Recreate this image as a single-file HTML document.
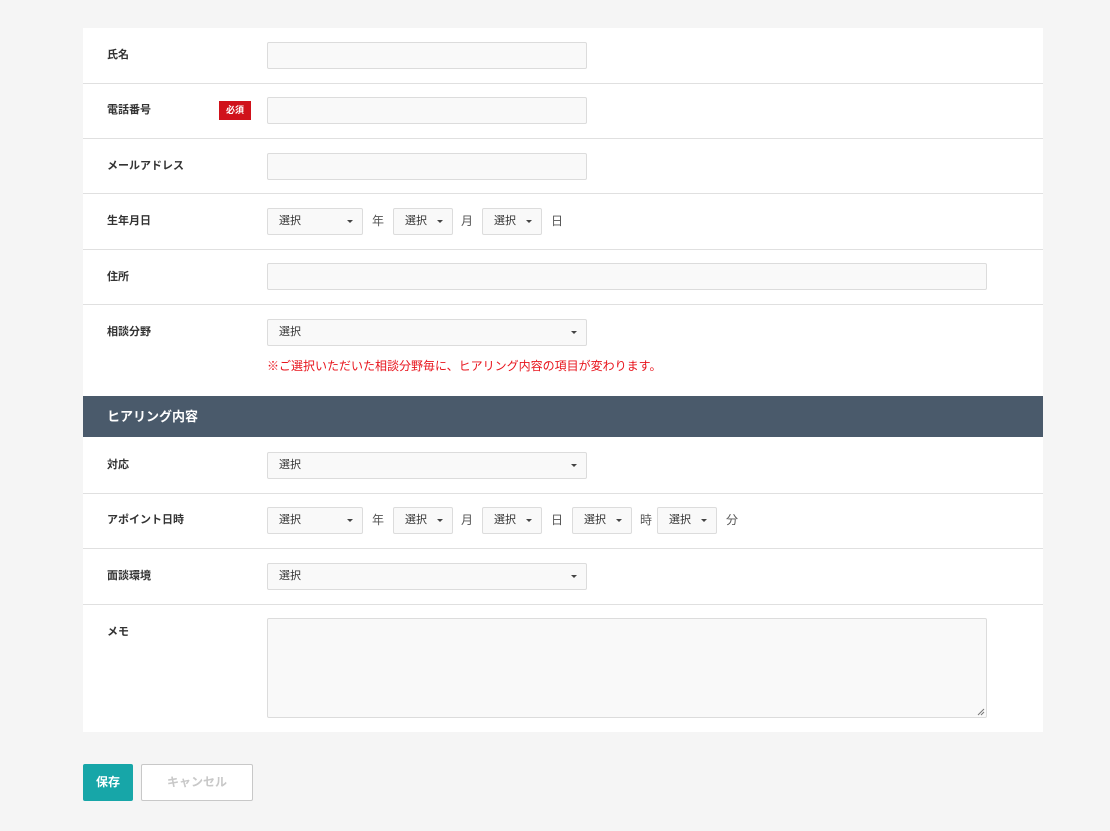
<!DOCTYPE html>
<html><head><meta charset="utf-8"><style>
*{margin:0;padding:0;box-sizing:border-box}
body{width:1110px;height:831px;background:#f5f5f5;position:relative;font-family:"Liberation Sans","Noto Sans CJK JP",sans-serif;overflow:hidden}
.card{position:absolute;left:83px;top:28px;width:960px;height:704px;background:#fff}
.a{position:absolute}
.hr{position:absolute;left:83px;width:960px;height:1px;background:#e0e0e0}
.lb{position:absolute;left:107px;font-size:11px;font-weight:bold;color:#333;line-height:14px}
.in{position:absolute;background:#f9f9f9;border:1px solid #dcdcdc;border-radius:2px;height:27px}
.sel{position:absolute;background:#f9f9f9;border:1px solid #dcdcdc;border-radius:2px;height:27px;font-size:11px;color:#333;padding-left:11px;line-height:25px}
.sel:after{content:"";position:absolute;right:9px;top:11px;border-left:3px solid transparent;border-right:3px solid transparent;border-top:3px solid #444}
.u{position:absolute;font-size:12px;color:#555;line-height:14px}
</style></head><body>
<div class="card"></div>
<div class="hr" style="top:83px"></div>
<div class="hr" style="top:138px"></div>
<div class="hr" style="top:193px"></div>
<div class="hr" style="top:249px"></div>
<div class="hr" style="top:304px"></div>
<div class="hr" style="top:493px"></div>
<div class="hr" style="top:548px"></div>
<div class="hr" style="top:604px"></div>

<div class="lb" style="top:48px">氏名</div>
<div class="in" style="left:267px;top:42px;width:320px"></div>

<div class="lb" style="top:103px">電話番号</div>
<div class="a" style="left:219px;top:101px;width:32px;height:19px;background:#d0121b;color:#fff;font-size:9px;font-weight:bold;text-align:center;line-height:19px">必須</div>
<div class="in" style="left:267px;top:97px;width:320px"></div>

<div class="lb" style="top:159px">メールアドレス</div>
<div class="in" style="left:267px;top:153px;width:320px"></div>

<div class="lb" style="top:214px">生年月日</div>
<div class="sel" style="left:267px;top:208px;width:96px">選択</div>
<div class="u" style="left:372px;top:214px">年</div>
<div class="sel" style="left:393px;top:208px;width:60px">選択</div>
<div class="u" style="left:461px;top:214px">月</div>
<div class="sel" style="left:482px;top:208px;width:60px">選択</div>
<div class="u" style="left:551px;top:214px">日</div>

<div class="lb" style="top:270px">住所</div>
<div class="in" style="left:267px;top:263px;width:720px"></div>

<div class="lb" style="top:325px">相談分野</div>
<div class="sel" style="left:267px;top:319px;width:320px">選択</div>
<div class="a" style="left:267px;top:359px;font-size:12px;color:#e8141c;line-height:14px">※ご選択いただいた相談分野毎に、ヒアリング内容の項目が変わります。</div>

<div class="a" style="left:83px;top:396px;width:960px;height:41px;background:#4a5a6b;color:#fff;font-size:13px;font-weight:bold;padding-left:24px;line-height:41px">ヒアリング内容</div>

<div class="lb" style="top:458px">対応</div>
<div class="sel" style="left:267px;top:452px;width:320px">選択</div>

<div class="lb" style="top:513px">アポイント日時</div>
<div class="sel" style="left:267px;top:507px;width:96px">選択</div>
<div class="u" style="left:372px;top:513px">年</div>
<div class="sel" style="left:393px;top:507px;width:60px">選択</div>
<div class="u" style="left:461px;top:513px">月</div>
<div class="sel" style="left:482px;top:507px;width:60px">選択</div>
<div class="u" style="left:551px;top:513px">日</div>
<div class="sel" style="left:572px;top:507px;width:60px">選択</div>
<div class="u" style="left:640px;top:513px">時</div>
<div class="sel" style="left:657px;top:507px;width:60px">選択</div>
<div class="u" style="left:726px;top:513px">分</div>

<div class="lb" style="top:569px">面談環境</div>
<div class="sel" style="left:267px;top:563px;width:320px">選択</div>

<div class="lb" style="top:625px">メモ</div>
<div class="in" style="left:267px;top:618px;width:720px;height:100px"></div>
<svg class="a" style="left:977px;top:708px" width="8" height="8"><path d="M1 7L7 1M4 7L7 4" stroke="#777" stroke-width="1"/></svg>

<div class="a" style="left:83px;top:764px;width:50px;height:37px;background:#17a6a8;border-radius:2px;color:#fff;font-size:12px;font-weight:bold;text-align:center;line-height:37px">保存</div>
<div class="a" style="left:141px;top:764px;width:112px;height:37px;background:#fff;border:1px solid #c8c8c8;border-radius:2px;color:#c8c8c8;font-size:12px;font-weight:bold;text-align:center;line-height:35px">キャンセル</div>
</body></html>
